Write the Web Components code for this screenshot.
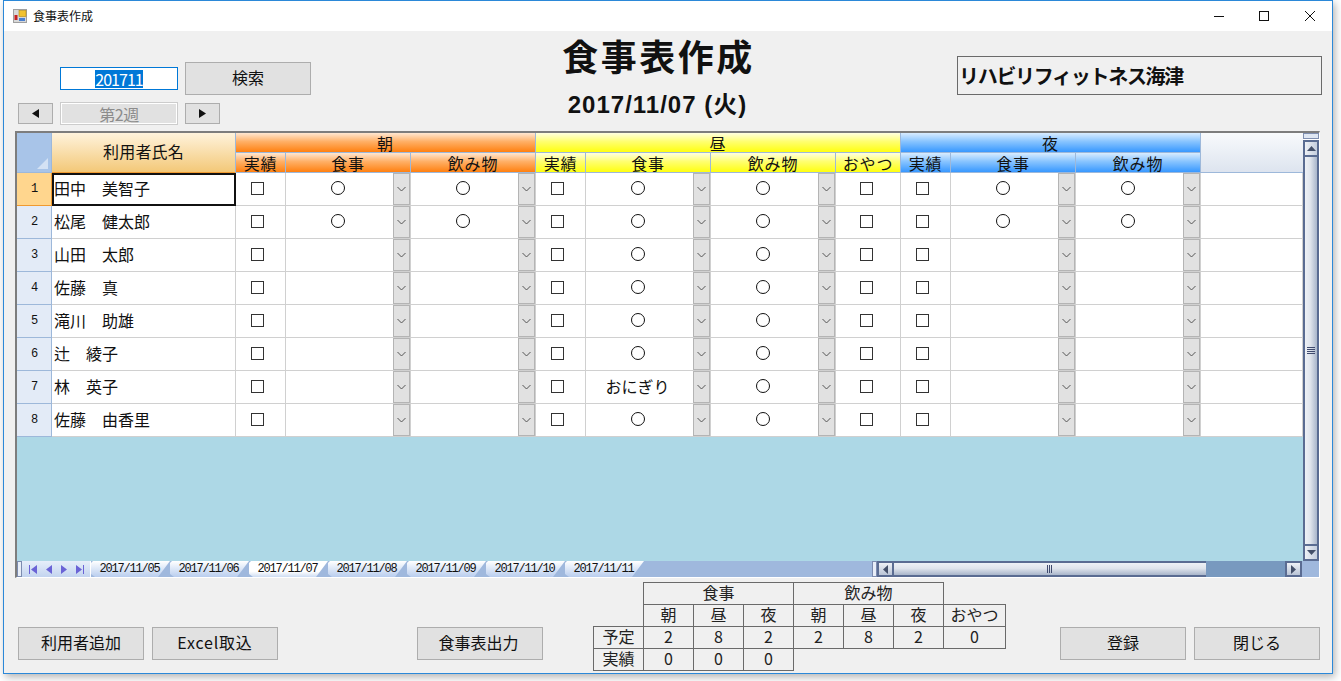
<!DOCTYPE html>
<html lang="ja">
<head>
<meta charset="utf-8">
<title>食事表作成</title>
<style>
html, body { margin: 0; padding: 0; width: 1341px; height: 681px; overflow: hidden; background: #fff; }
body { font-family: "Noto Sans CJK JP", sans-serif; color: #000; }
</style>
</head>
<body>
<meal-window></meal-window>

<script>
const FONT = '"Noto Sans CJK JP", sans-serif';
const MONO = '"Liberation Mono", "Noto Sans CJK JP", monospace';

class WinTitlebar extends HTMLElement {
    constructor() {
        super();
        this.attachShadow({ mode: 'open' });
        this.shadowRoot.innerHTML = `
<style>
:host { display: flex; align-items: center; height: 30px; background: #fff; padding-left: 9px; }
.name { font: 12px/14px ${FONT}; margin-left: 6px; color: #111; letter-spacing: 0; }
.ctl { margin-left: auto; display: flex; }
.ctl svg { display: block; width: 46px; height: 30px; }
</style>
<svg width="14" height="14" viewBox="0 0 14 14">
  <rect x="0.5" y="0.5" width="13" height="13" fill="#d8d8d8" stroke="#a0a0a0"/>
  <rect x="6" y="1.500" width="7" height="6" fill="#f2c230" stroke="#b58a10" stroke-width=".6"/>
  <rect x="1.500" y="6" width="3" height="5" fill="#c62020"/>
  <rect x="6" y="9" width="6" height="3" fill="#4a80d0"/>
</svg>
<span class="name">食事表作成</span>
<div class="ctl">
  <svg viewBox="0 0 46 30"><path d="M20 15.500h10" stroke="#111" fill="none"/></svg>
  <svg viewBox="0 0 46 30"><rect x="19.500" y="10.500" width="9" height="9" stroke="#111" fill="none"/></svg>
  <svg viewBox="0 0 46 30"><path d="M19 10l10 10M29 10l-10 10" stroke="#111" fill="none"/></svg>
</div>`;
    }
}

class WinButton extends HTMLElement {
    constructor() {
        super();
        this.attachShadow({ mode: 'open' });
        this.shadowRoot.innerHTML = `
<style>
:host { display: flex; align-items: center; justify-content: center; box-sizing: border-box; flex: none;
    width: 126px; height: 33px; padding-bottom: 3px; background: #e1e1e1; border: 1px solid #adadad;
    font: 16px/20px ${FONT}; color: #111; }
:host([small]) { width: 35px; height: 21px; padding-bottom: 0; }
svg { display: block; }
</style>
<slot></slot>`;
    }
}

class DateSheet extends HTMLElement {
    constructor() {
        super();
        this.attachShadow({ mode: 'open' });
        // 列幅: 行ヘッダ, 氏名, 朝3, 昼4, 夜3, 余白
        const widths = [35, 184, 50, 125, 125, 50, 125, 125, 65, 50, 125, 125, 102];
        const columns = widths.map(w => w + 'px').join(' ');
        const users = [
            ['田中　美智子', 1, 1, 1, 1, 1, 1, 1],
            ['松尾　健太郎', 1, 1, 1, 1, 1, 1, 1],
            ['山田　太郎', 0, 0, 1, 1, 1, 0, 0],
            ['佐藤　真', 0, 0, 1, 1, 1, 0, 0],
            ['滝川　助雄', 0, 0, 1, 1, 1, 0, 0],
            ['辻　綾子', 0, 0, 1, 1, 1, 0, 0],
            ['林　英子', 0, 0, 'おにぎり', 1, 1, 0, 0],
            ['佐藤　由香里', 0, 0, 1, 1, 1, 0, 0]
        ];

        const check = '<div class="c chk"><i></i></div>';
        const checkWide = '<div class="c chk wide"><i></i></div>';
        const combo = (value) => {
            let inner = '';
            if (value === 1) {
                inner = '<span class="maru"></span>';
            } else if (value) {
                inner = `<span>${value}</span>`;
            }
            return `<div class="c combo"><div class="val">${inner}</div><div class="drop"><svg width="9" height="6" viewBox="0 0 9 6"><path d="M.5 1l4 4 4-4" fill="none" stroke="#555"/></svg></div></div>`;
        };

        let rows = '';
        users.forEach((user, i) => {
            rows += `<div class="rh ${i === 0 ? 'on' : ''}">${i + 1}</div>`;
            rows += `<div class="c name ${i === 0 ? 'cur' : ''}">${user[0]}</div>`;
            rows += check + combo(user[1]) + combo(user[2]);
            rows += check + combo(user[3]) + combo(user[4]) + checkWide;
            rows += check + combo(user[6]) + combo(user[7]);
            rows += '<div class="c"></div>';
        });

        this.shadowRoot.innerHTML = `
<style>
:host { display: block; box-sizing: border-box; width: 1305px; height: 447px; background: #fff;
    border: 1px solid #fff; border-top: 2px solid #7d7d7d; border-left: 2px solid #7d7d7d;
    font: 16px/20px ${FONT}; color: #111; }
.top { display: flex; height: 428px; }
.main { width: 1286px; background: #add8e6; }
.grid { display: grid; grid-template-columns: ${columns}; grid-template-rows: 20px 20px repeat(8, 33px); }
.corner { grid-row: span 2; background: #a8c4e8; border-right: 1px solid #9db8da; border-bottom: 1px solid #9db8da; position: relative; box-sizing: border-box; }
.corner::after { content: ""; position: absolute; right: 3px; bottom: 3px; border-style: solid; border-width: 0 0 11px 11px; border-color: transparent transparent #d4e2f4 transparent; }
.h { display: flex; align-items: center; justify-content: center; box-sizing: border-box; line-height: 16px; letter-spacing: .8px;
    border-right: 1px solid #9db8da; border-bottom: 1px solid #9db8da; white-space: nowrap; }
.nm { grid-row: span 2; background: linear-gradient(#fff3dc, #f3c878); border-bottom-color: #f09a30; letter-spacing: .2px; padding-bottom: 4px; }
.o { background: linear-gradient(#ffe7d2 0, #ffb066 45%, #ff8010 100%); }
.y { background: linear-gradient(#ffffe0 0, #ffff70 45%, #ffff10 100%); }
.b { background: linear-gradient(#d8ecff 0, #88c4ff 45%, #3898ff 100%); }
.blank { grid-row: span 2; background: linear-gradient(#f8fafc, #dde4ef); border-bottom: 1px solid #9db8da; }
.span3 { grid-column: span 3; } .span4 { grid-column: span 4; }
.rh { display: flex; align-items: center; justify-content: center; box-sizing: border-box; padding-left: 1px;
    background: #e3ebf7; border-right: 1px solid #9db8da; border-bottom: 1px solid #9db8da; font: 12px/12px ${MONO}; }
.rh.on { background: #ffd68e; border-right-color: #f09a30; border-bottom-color: #f09a30; }
.c { box-sizing: border-box; background: #fff; border-right: 1px solid #d0d0d0; border-bottom: 1px solid #d0d0d0; display: flex; align-items: center; min-width: 0; }
.name { padding: 0 0 2px 2px; white-space: pre; }
.cur { outline: 2px solid #111; outline-offset: -2px; }
.chk { justify-content: center; padding: 0 7px 2px 0; }
.chk.wide { padding-right: 4px; }
.chk i { display: block; box-sizing: border-box; width: 13px; height: 13px; border: 1px solid #333; }
.combo { align-items: stretch; }
.val { flex: 1; display: flex; align-items: center; justify-content: center; padding: 0 4px 2px 0; white-space: nowrap; }
.maru { display: block; box-sizing: border-box; width: 14px; height: 14px; border: 1px solid #111; border-radius: 50%; }
.drop { box-sizing: border-box; width: 17px; background: #e1e1e1; border: 1px solid #b4b4b4; display: flex; align-items: center; justify-content: center; }
.vbar { width: 16px; display: flex; flex-direction: column; }
.vtop { height: 6px; background: #dfe7f3; border: 1px solid #7f8fb0; box-sizing: border-box; }
.varr { height: 17px; box-sizing: border-box; border: 2px solid #5a6c92; background: linear-gradient(90deg,#eef1f6,#c4cede); display: flex; align-items: center; justify-content: center; }
.vthumb { flex: 1; box-sizing: border-box; border: solid #5a6c92; border-width: 0 2px; background: linear-gradient(90deg,#eef1f6,#dfe4ec 45%,#a9b6cb); display: flex; align-items: center; justify-content: center; }
.up { margin-top: 1px; }
</style>
<div class="top">
  <div class="main">
    <div class="grid">
      <div class="corner"></div>
      <div class="h nm">利用者氏名</div>
      <div class="h o span3">朝</div>
      <div class="h y span4">昼</div>
      <div class="h b span3">夜</div>
      <div class="blank"></div>
      <div class="h o">実績</div><div class="h o">食事</div><div class="h o">飲み物</div>
      <div class="h y">実績</div><div class="h y">食事</div><div class="h y">飲み物</div><div class="h y">おやつ</div>
      <div class="h b">実績</div><div class="h b">食事</div><div class="h b">飲み物</div>
      ${rows}
    </div>
  </div>
  <div class="vbar">
    <div class="vtop"></div>
    <div class="varr up"><svg width="9" height="5"><path d="M4.500 0L9 5H0z" fill="#44506a"/></svg></div>
    <div class="vthumb"><svg width="8" height="7"><path d="M0 .5h8M0 2.500h8M0 4.500h8M0 6.500h8" stroke="#3f4a6e" fill="none"/></svg></div>
    <div class="varr"><svg width="9" height="5"><path d="M0 0h9L4.500 5z" fill="#44506a"/></svg></div>
  </div>
</div>
<sheet-tabs></sheet-tabs>`;
    }
}

class SheetTabs extends HTMLElement {
    constructor() {
        super();
        this.attachShadow({ mode: 'open' });
        const dates = ['05', '06', '07', '08', '09', '10', '11'];
        const tabs = dates.map(d => `<div class="tab ${d === '07' ? 'on' : ''}"><span>2017/11/${d}</span></div>`).join('');
        this.shadowRoot.innerHTML = `
<style>
:host { display: flex; height: 16px; background: #9fb8dd; align-items: stretch; overflow: hidden; }
.grip { width: 5px; flex: none; box-sizing: border-box; border: 1px solid #7c8cb0; background: #e8eef8; }
.nav { width: 69px; flex: none; display: flex; align-items: center; justify-content: space-around; padding: 0 2px; box-sizing: border-box; background: linear-gradient(#e6eefa, #c3d4ef); border-right: 1px solid #fff; }
.tab { width: 79px; flex: none; display: flex; align-items: center; justify-content: center; box-sizing: border-box; padding-right: 2px;
    clip-path: polygon(0 2px, 2px 0, 100% 0, calc(100% - 12px) 100%, 4px 100%, 0 calc(100% - 3px));
    background: linear-gradient(#fff 0, #dfe9f8 45%, #b9cdee 100%); font: 12px/14px ${MONO}; letter-spacing: -1.2px; }
.tab.on { background: linear-gradient(#fff 0, #fff 65%, #cddcf2 100%); }
.sp { width: 228px; flex: none; }
.hgrip { width: 5px; flex: none; box-sizing: border-box; border: 1px solid #7c8cb0; background: #e8eef8; }
.arr { width: 17px; flex: none; box-sizing: border-box; border: 2px solid #5a6c92; background: linear-gradient(#eef1f6,#b9c4d6); display: flex; align-items: center; justify-content: center; }
.thumb { width: 312px; flex: none; box-sizing: border-box; border: solid #5a6c92; border-width: 2px 0; background: linear-gradient(#eef1f6,#dfe4ec 45%,#a9b6cb); display: flex; align-items: center; justify-content: center; }
.track { width: 79px; flex: none; background: #7899bf; }
</style>
<div class="grip"></div>
<div class="nav">
  <svg width="8" height="9"><path d="M0 0h1v9H0zM8 0v9L2 4.500z" fill="#6a63d6"/></svg>
  <svg width="6" height="9"><path d="M6 0v9L0 4.500z" fill="#6a63d6"/></svg>
  <svg width="6" height="9"><path d="M0 0v9l6-4.500z" fill="#6a63d6"/></svg>
  <svg width="8" height="9"><path d="M7 0h1v9H7zM0 0v9l6-4.500z" fill="#6a63d6"/></svg>
</div>
${tabs}
<div class="sp"></div>
<div class="hgrip"></div>
<div class="arr"><svg width="5" height="9"><path d="M5 0v9L0 4.500z" fill="#44506a"/></svg></div>
<div class="thumb"><svg width="6" height="8"><path d="M.5 0v8M2.500 0v8M4.500 0v8" stroke="#3f4a6e" fill="none"/></svg></div>
<div class="track"></div>
<div class="arr"><svg width="5" height="9"><path d="M0 0v9l5-4.500z" fill="#44506a"/></svg></div>`;
    }
}

class MealSummary extends HTMLElement {
    constructor() {
        super();
        this.attachShadow({ mode: 'open' });
        const cells = [
            ['', 1, 'e'], ['食事', 3], ['飲み物', 3], ['', 1, 'e'],
            ['', 1, 'e'], ['朝', 1], ['昼', 1], ['夜', 1], ['朝', 1], ['昼', 1], ['夜', 1], ['おやつ', 1],
            ['予定', 1], ['2', 1], ['8', 1], ['2', 1], ['2', 1], ['8', 1], ['2', 1], ['0', 1],
            ['実績', 1], ['0', 1], ['0', 1], ['0', 1], ['', 4, 'e']
        ];
        const html = cells.map(c => `<div class="${c[2] === 'e' ? 'e' : 'd'}" style="grid-column: span ${c[1]}">${c[0]}</div>`).join('');
        this.shadowRoot.innerHTML = `
<style>
:host { display: block; flex: none; font: 16px/18px ${FONT}; color: #222; }
.t { display: grid; grid-template-columns: repeat(7, 50px) 62px; grid-template-rows: repeat(4, 22px); width: 412px; }
.d { display: flex; align-items: center; justify-content: center; box-sizing: border-box; padding-bottom: 3px;
    outline: 1px solid #6a6a6a; outline-offset: -1px; margin: 0 -1px -1px 0; }
</style>
<div class="t">${html}</div>`;
    }
}

class MealWindow extends HTMLElement {
    constructor() {
        super();
        this.attachShadow({ mode: 'open' });
        this.shadowRoot.innerHTML = `
<style>
:host { display: block; box-sizing: border-box; width: 1330px; height: 674px; margin-left: 3px; background: #f0f0f0;
    border: 1px solid #2b88d8; box-shadow: 2px 3px 8px rgba(0,0,0,.3); font: 16px/20px ${FONT}; color: #111; }
.body { display: flex; flex-direction: column; padding: 0 0 0 11px; }
.head { display: flex; height: 100px; align-items: flex-start; }
.left { width: 295px; flex: none; padding: 36px 0 0 3px; box-sizing: border-box; }
.r1 { display: flex; align-items: flex-start; padding-left: 42px; gap: 7px; }
.r1 win-button { margin-top: -5px; }
.input { box-sizing: border-box; flex: none; width: 118px; height: 23px; border: 1px solid #0078d7; background: #fff; display: flex; align-items: center; justify-content: center; }
.input span { background: #0078d7; color: #fff; font: 16px/18px ${FONT}; letter-spacing: -1px; }
.r2 { display: flex; align-items: center; margin-top: 7px; }
.week { box-sizing: border-box; width: 118px; height: 23px; margin: 0 7px; border: 1px solid #ccc; background: #e1e1e1; outline: 1px solid #fff; outline-offset: -2px; display: flex; align-items: center; justify-content: center; color: #8c8c8c; letter-spacing: -.4px; }
.center { flex: none; box-sizing: border-box; width: 625px; display: flex; flex-direction: column; align-items: center; padding-left: 72px; }
h1 { margin: 0; font: 700 36px/48px ${FONT}; letter-spacing: 2.5px; color: #111; }
.date { font: 700 24px/28px "Liberation Sans", ${FONT}; margin-top: 12px; margin-right: 2px; letter-spacing: 1px; color: #111; }
.office { box-sizing: border-box; flex: none; width: 365px; height: 39px; margin: 25px 0 0 22px; border: 1px solid #6a6a6a; display: flex; align-items: center; padding-left: 1px; font: 700 20px/26px ${FONT}; letter-spacing: -1.3px; color: #111; }
.foot { display: flex; align-items: flex-start; margin-top: 4px; }
.btns { display: flex; gap: 8px; }
</style>
<win-titlebar></win-titlebar>
<div class="body">
  <div class="head">
    <div class="left">
      <div class="r1">
        <div class="input"><span>201711</span></div>
        <win-button>検索</win-button>
      </div>
      <div class="r2">
        <win-button small><svg width="7" height="9"><path d="M7 0v9L0 4.500z" fill="#111"/></svg></win-button>
        <div class="week">第2週</div>
        <win-button small><svg width="7" height="9"><path d="M0 0v9l7-4.500z" fill="#111"/></svg></win-button>
      </div>
    </div>
    <div class="center">
      <h1>食事表作成</h1>
      <div class="date">2017/11/07 (火)</div>
    </div>
    <div class="office">リハビリフィットネス海津</div>
  </div>
  <date-sheet></date-sheet>
  <div class="foot">
    <div class="btns" style="margin: 45px 0 0 3px"><win-button>利用者追加</win-button><win-button style="letter-spacing: .8px">Excel取込</win-button></div>
    <win-button style="margin: 45px 0 0 139px; padding-right: 3px">食事表出力</win-button>
    <meal-summary style="margin: 0 0 0 50px"></meal-summary>
    <div class="btns" style="margin: 45px 0 0 55px"><win-button>登録</win-button><win-button>閉じる</win-button></div>
  </div>
</div>`;
    }
}

customElements.define('win-titlebar', WinTitlebar);
customElements.define('win-button', WinButton);
customElements.define('sheet-tabs', SheetTabs);
customElements.define('date-sheet', DateSheet);
customElements.define('meal-summary', MealSummary);
customElements.define('meal-window', MealWindow);
</script>
</body>
</html>
